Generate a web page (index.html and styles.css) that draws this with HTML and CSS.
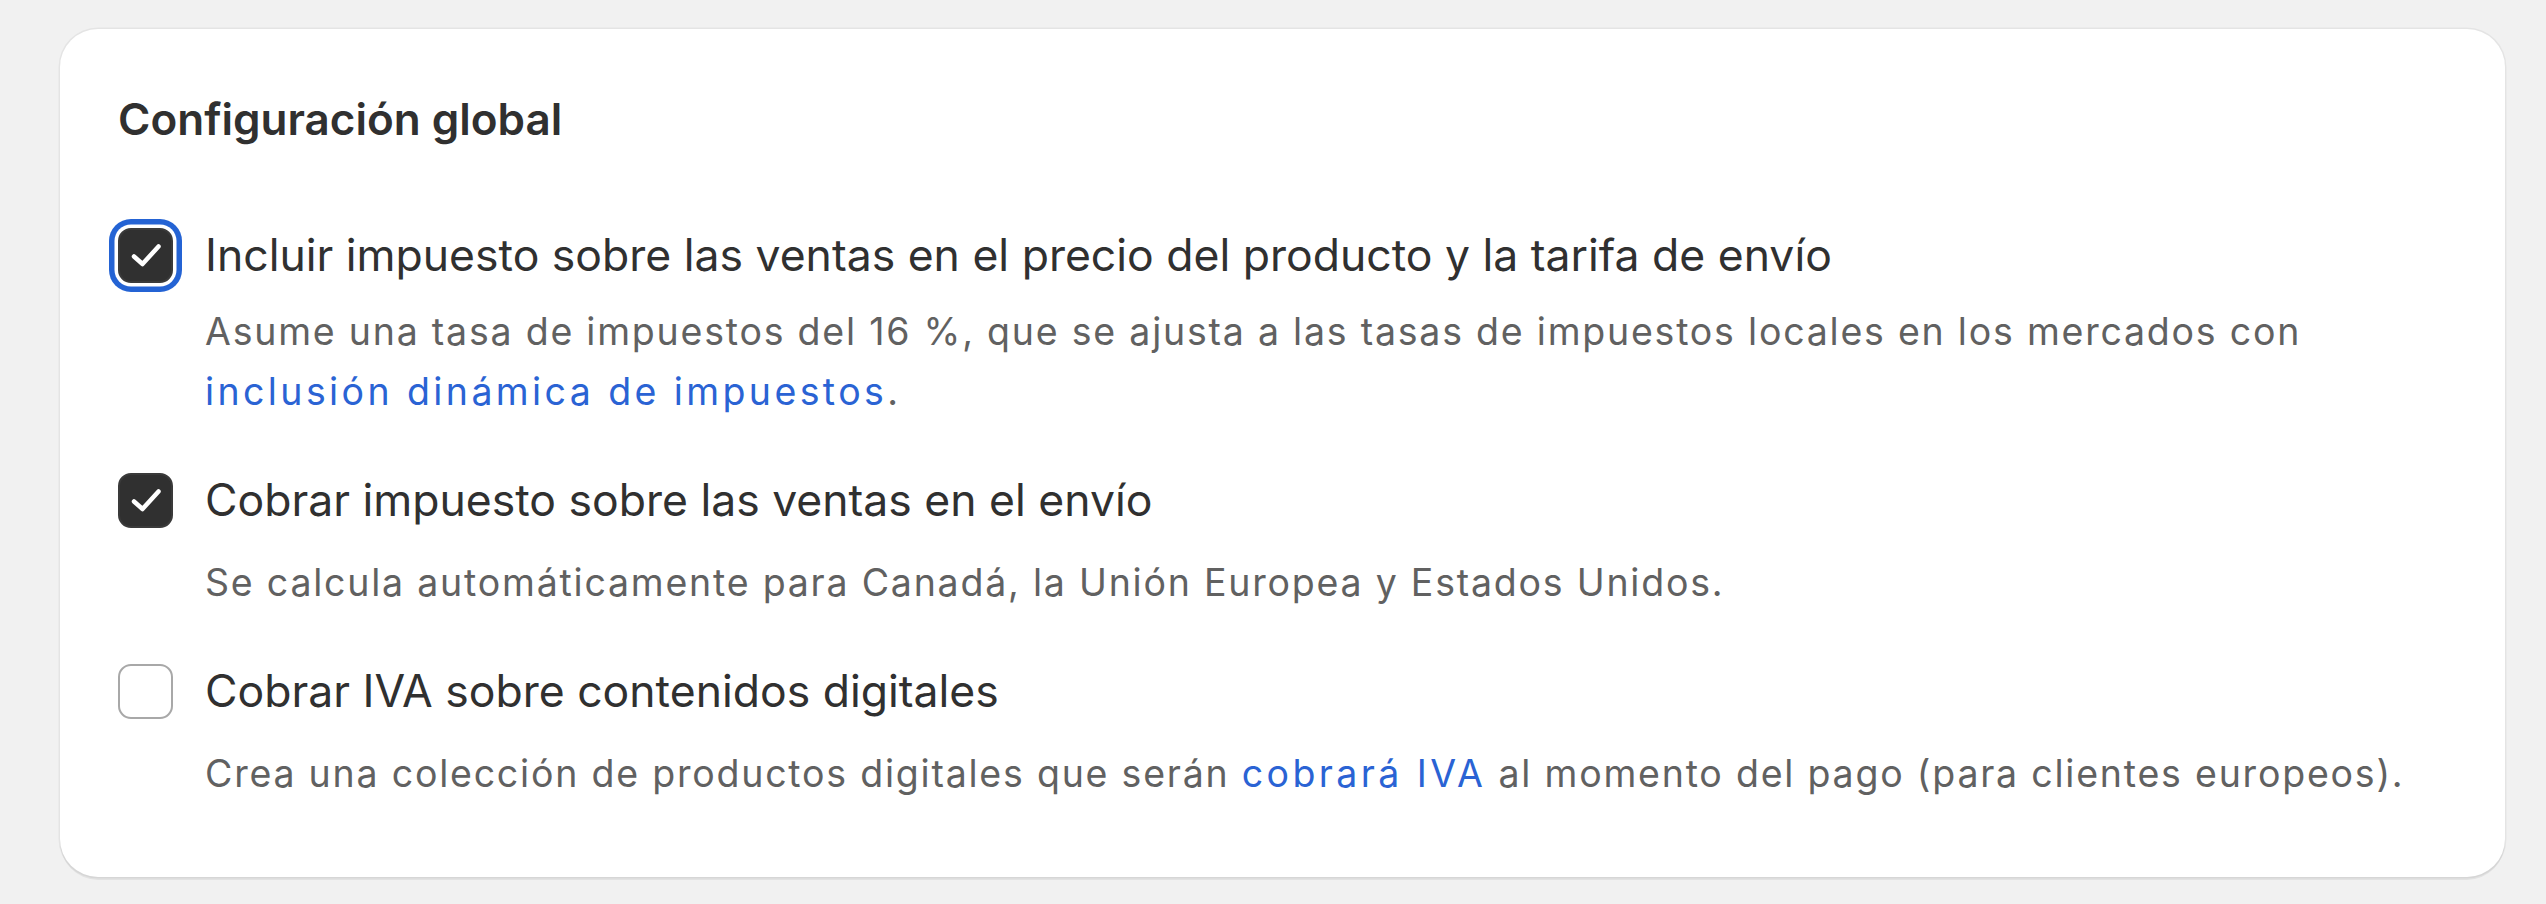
FILE: index.html
```html
<!DOCTYPE html>
<html lang="es">
<head>
<meta charset="utf-8">
<title>Configuración global</title>
<link rel="stylesheet" href="styles.css">
</head>
<body>
<main class="page">
  <section class="card">
    <h2 class="card-title">Configuración global</h2>
    <div class="options">
      <div class="option">
        <span class="box box-checked box-focused">
          <svg viewBox="0 0 56 56" class="check"><path d="M16 29.5 L24.5 37 L40.5 19.5"/></svg>
        </span>
        <span class="label">Incluir impuesto sobre las ventas en el precio del producto y la tarifa de envío</span>
        <p class="help help-first">Asume una tasa de impuestos del 16 %, que se ajusta a las tasas de impuestos locales en los mercados con <a href="#">inclusión dinámica de impuestos</a>.</p>
      </div>
      <div class="option">
        <span class="box box-checked">
          <svg viewBox="0 0 56 56" class="check"><path d="M16 29.5 L24.5 37 L40.5 19.5"/></svg>
        </span>
        <span class="label">Cobrar impuesto sobre las ventas en el envío</span>
        <p class="help">Se calcula automáticamente para Canadá, la Unión Europea y Estados Unidos.</p>
      </div>
      <div class="option">
        <span class="box"></span>
        <span class="label">Cobrar IVA sobre contenidos digitales</span>
        <p class="help">Crea una colección de productos digitales que serán <a href="#">cobrará IVA</a> al momento del pago (para clientes europeos).</p>
      </div>
    </div>
  </section>
</main>
</body>
</html>
```

FILE: styles.css
```css
* { box-sizing: border-box; }
html, body { margin: 0; padding: 0; }
body {
  background: #f1f1f1;
  font-family: "Inter", "Noto Sans", sans-serif;
  color: #303030;
}
.page { padding: 29px 41px 27px 60px; }
.card {
  background: #fff;
  border-radius: 38px;
  height: 848px;
  padding: 60px 58px 0 58px;
  box-shadow: 0 3px 0 rgba(0,0,0,0.06), 0 0 0 1.5px rgba(0,0,0,0.05);
}
.card-title {
  margin: 0;
  font-size: 44px;
  line-height: 60px;
  font-weight: 600;
}
.options {
  margin-top: 76px;
  display: flex;
  flex-direction: column;
  gap: 48px;
}
.option {
  display: grid;
  grid-template-columns: 56px 1fr;
  column-gap: 31px;
  align-items: center;
}
.label { font-size: 44.5px; line-height: 60px; }
.help {
  grid-column: 2;
  margin: 23px 0 0;
  font-size: 37.5px;
  letter-spacing: 1.78px;
  line-height: 60px;
  color: #616161;
}
.help-first { margin-top: 17px; }
.help a { color: #2a63d4; text-decoration: none; letter-spacing: 3.4px; }
.box {
  width: 55px; height: 55px;
  border-radius: 13px;
  border: 2px solid #a8a8a8;
  display: flex; align-items: center; justify-content: center;
  background: #fff;
}
.box-checked { background: #303030; border-color: #3a3a3a; }
.box-focused { box-shadow: 0 0 0 3.5px #fff, 0 0 0 9px #2463d4; }
.check { width: 56px; height: 56px; flex: none; }
.check path { fill: none; stroke: #fff; stroke-width: 4.5; stroke-linecap: round; stroke-linejoin: round; }
```
